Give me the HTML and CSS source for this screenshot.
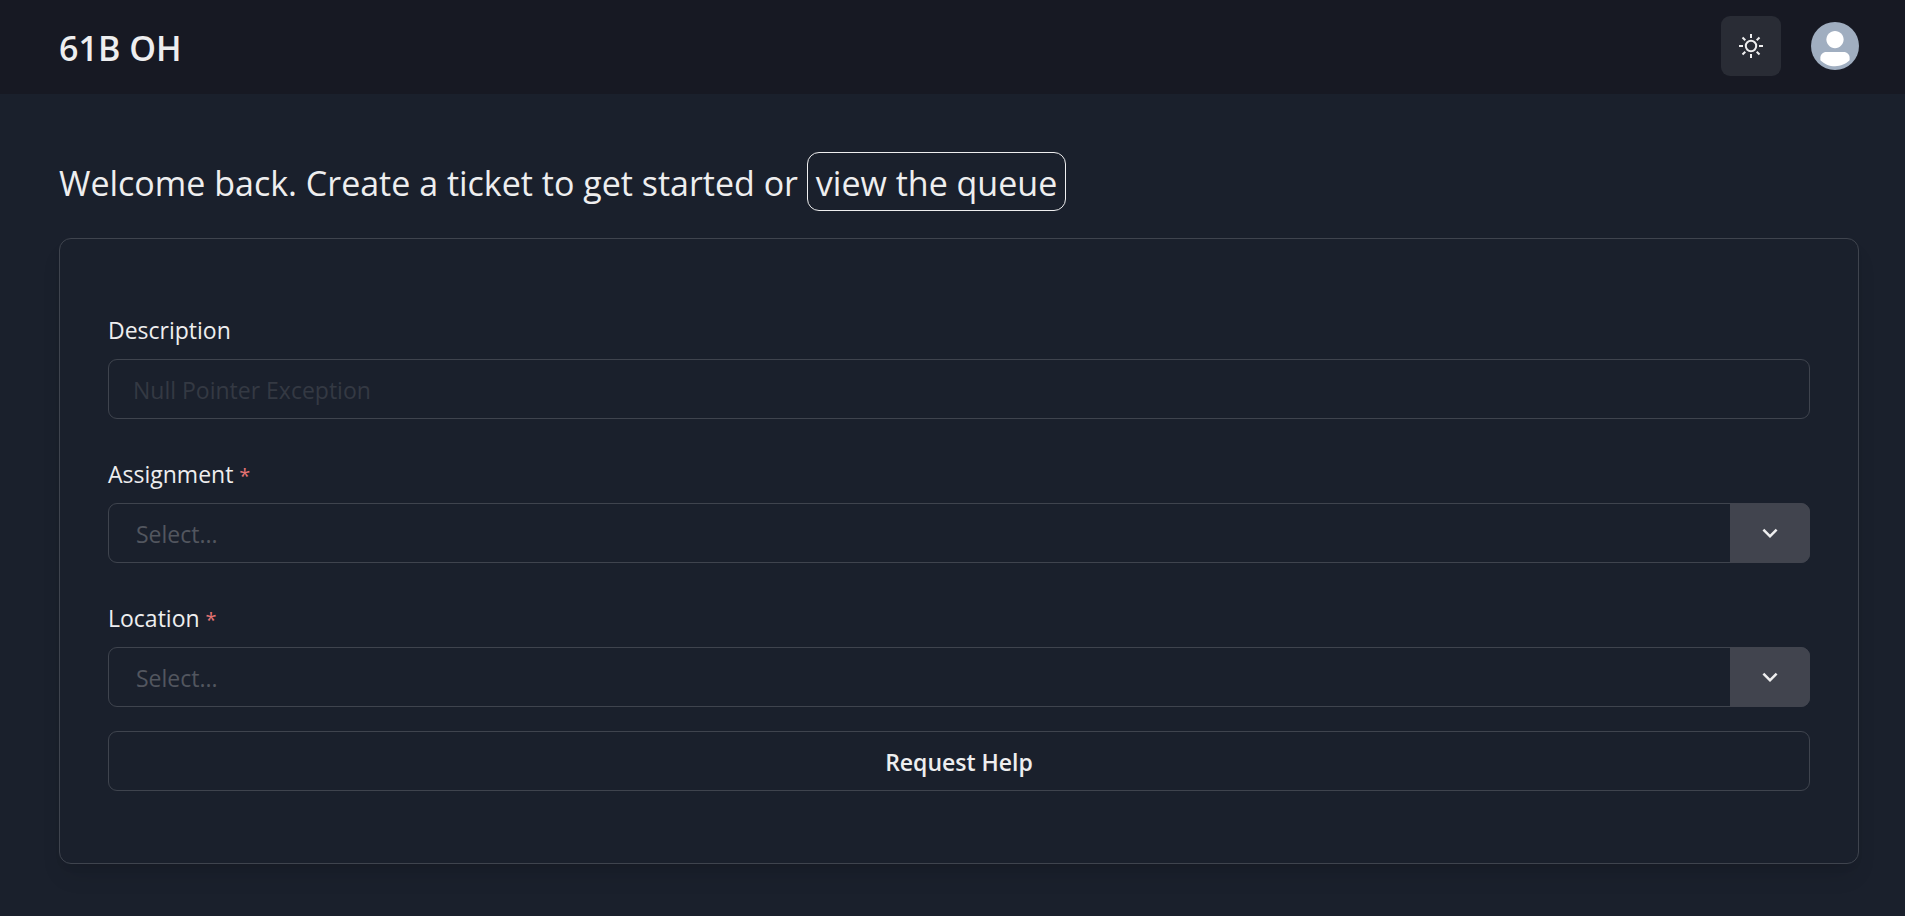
FILE: index.html
```html
<!DOCTYPE html>
<html lang="en">
<head>
<meta charset="utf-8">
<meta name="viewport" content="width=device-width, initial-scale=1">
<title>61B OH</title>
<link rel="stylesheet" href="styles.css">
</head>
<body>
<header class="navbar">
  <h1 class="brand">61B OH</h1>
  <div class="nav-actions">
    <button class="theme-toggle" type="button" aria-label="Toggle color mode">
      <svg class="sun" viewBox="0 0 24 24" fill="none" stroke="currentColor" stroke-width="2" aria-hidden="true">
        <circle cx="12" cy="12" r="5.2"/>
        <path d="M12 0v4M12 20v4M0 12h4M20 12h4M3.5 3.5l2.8 2.8M17.7 17.7l2.8 2.8M3.5 20.5l2.8-2.8M17.7 6.3l2.8-2.8"/>
      </svg>
    </button>
    <button class="avatar" type="button" aria-label="Account">
      <svg class="avatar-icon" viewBox="0 0 128 128" fill="#fff" aria-hidden="true">
        <path d="M103,102.1388 C93.094,111.92 79.3504,118 64.1638,118 C48.8056,118 34.9294,111.768 25,101.7892 L25,95.2 C25,86.8096 31.981,80 40.6,80 L87.4,80 C96.019,80 103,86.8096 103,95.2 L103,102.1388 Z"/>
        <path d="M63.9961647,24 C51.2938136,24 41,34.2938136 41,46.9961647 C41,59.7061864 51.2938136,70 63.9961647,70 C76.6985159,70 87,59.7061864 87,46.9961647 C87,34.2938136 76.6985159,24 63.9961647,24"/>
      </svg>
    </button>
  </div>
</header>
<main class="page">
  <p class="welcome">Welcome back. Create a ticket to get started or <a class="queue-link" href="#queue">view the queue</a></p>
  <form class="card">
    <div class="field">
      <label class="label" for="description">Description</label>
      <input class="control" id="description" type="text" placeholder="Null Pointer Exception">
    </div>
    <div class="field">
      <label class="label" for="assignment">Assignment <span class="required">*</span></label>
      <div class="select-wrap">
        <select class="control select" id="assignment"><option>Select...</option></select>
        <span class="indicator"><svg class="chevron" viewBox="0 0 24 24" aria-hidden="true"><path fill="currentColor" d="M16.59 8.59L12 13.17 7.41 8.59 6 10l6 6 6-6z"/></svg></span>
      </div>
    </div>
    <div class="field">
      <label class="label" for="location">Location <span class="required">*</span></label>
      <div class="select-wrap">
        <select class="control select" id="location"><option>Select...</option></select>
        <span class="indicator"><svg class="chevron" viewBox="0 0 24 24" aria-hidden="true"><path fill="currentColor" d="M16.59 8.59L12 13.17 7.41 8.59 6 10l6 6 6-6z"/></svg></span>
      </div>
    </div>
    <button class="submit" type="button">Request Help</button>
  </form>
</main>
</body>
</html>
```

FILE: styles.css
```css
* { box-sizing: border-box; }

body {
  margin: 0;
  background: #1a202c;
  color: #eeeeef;
  font-family: "Open Sans", "Noto Sans", sans-serif;
  font-size: 23px;
  line-height: 34px;
}

button, input, select { font: inherit; color: inherit; }

.navbar {
  display: flex;
  align-items: center;
  justify-content: space-between;
  height: 94px;
  padding: 0 46px 2px 59px;
  background: #171923;
}

.brand {
  margin: 0;
  padding-top: 4px;
  font-size: 34px;
  line-height: 54px;
  font-weight: 600;
}

.nav-actions { display: flex; align-items: center; gap: 30px; }

.theme-toggle {
  display: grid;
  place-items: center;
  width: 60px;
  height: 60px;
  padding: 0;
  border: 0;
  border-radius: 9px;
  background: #292c35;
}

.sun { width: 24px; height: 24px; }

.avatar {
  width: 48px;
  height: 48px;
  padding: 0;
  border: 0;
  border-radius: 50%;
  background: #a0aec0;
  overflow: hidden;
}

.avatar-icon { display: block; width: 48px; height: 48px; }

.page { padding: 58px 46px 52px 59px; }

.welcome {
  margin: 0 0 27px;
  font-size: 34px;
  line-height: 53px;
}

.queue-link {
  display: inline-block;
  padding: 4px 8px 0;
  border: 1px solid #eeeeef;
  border-radius: 12px;
  color: inherit;
  text-decoration: none;
}

.card {
  display: flex;
  flex-direction: column;
  gap: 36px;
  padding: 72px 48px;
  border: 1px solid #3f444e;
  border-radius: 12px;
  box-shadow: 0 15px 23px -5px rgba(0, 0, 0, 0.1), 0 6px 9px -3px rgba(0, 0, 0, 0.05);
}

.field { display: flex; flex-direction: column; gap: 12px; }

.label { align-self: flex-start; padding-top: 2px; }

.required { color: #e57373; font-size: 20px; line-height: 1; }

.control {
  display: block;
  width: 100%;
  height: 60px;
  padding: 2px 24px 0;
  border: 1px solid #3f444e;
  border-radius: 9px;
  background: transparent;
}

.control::placeholder { color: #343943; opacity: 1; }

.select-wrap { position: relative; }

.select { appearance: none; padding: 2px 107px 0 27px; color: #52565f; }

.select option { background: #1a202c; }

.indicator {
  position: absolute;
  top: 0;
  right: 0;
  bottom: 0;
  display: grid;
  place-items: center;
  width: 80px;
  border-radius: 0 9px 9px 0;
  background: #41444e;
  pointer-events: none;
}

.chevron { width: 30px; height: 30px; }

.submit {
  height: 60px;
  margin-top: -12px;
  padding: 2px 24px 0;
  border: 1px solid #3f444e;
  border-radius: 9px;
  background: transparent;
  font-weight: 600;
}
```
